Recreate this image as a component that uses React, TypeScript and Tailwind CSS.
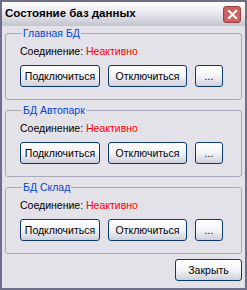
import React from "react";

const font = { fontFamily: '"Liberation Sans", Arial, sans-serif' };

function XpButton({ label, className = "" }: { label: string; className?: string }) {
  return (
    <button
      className={`h-[22px] rounded-[3px] border border-[#0a3a6e] bg-gradient-to-b from-white via-[#f3f3f6] to-[#cfcfdb] text-[10.5px] leading-none text-black ${className}`}
    >
      {label}
    </button>
  );
}

function DbGroup({ title }: { title: string }) {
  return (
    <fieldset className="rounded-[3px] border border-[#a9a9b8] px-[14px] pb-[12px]">
      <legend className="ml-[2px] px-[1px] text-[10.5px] leading-[13px] text-[#0046d5]">{title}</legend>
      <div className="mt-[5px] flex h-[13px] items-center text-[10.5px] leading-[13px]">
        <span className="w-[66px] text-black">Соединение:</span>
        <span className="text-[#ff0000]">Неактивно</span>
      </div>
      <div className="mt-[7px] flex gap-[8px]">
        <XpButton label="Подключиться" className="w-[80px]" />
        <XpButton label="Отключиться" className="w-[79px]" />
        <XpButton label="..." className="w-[28px]" />
      </div>
    </fieldset>
  );
}

export default function App() {
  return (
    <div style={font} className="flex h-[290px] w-[247px] flex-col border-2 border-[#6e6e88] bg-[#e3e2e8]">
      <div className="flex h-[24px] items-center justify-between bg-gradient-to-b from-white via-[#e6e6ec] to-[#c4c4d0] pl-[3px] pr-[4px]">
        <span className="text-[11.5px] font-bold text-black">Состояние баз данных</span>
        <div className="flex h-[17px] w-[18px] items-center justify-center rounded-[3px] border border-[#9a4040] bg-[#d06060]">
          <svg width="11" height="11" viewBox="0 0 11 11">
            <path d="M2 2 L9 9 M9 2 L2 9" stroke="white" strokeWidth="2.2" strokeLinecap="square" />
          </svg>
        </div>
      </div>
      <div className="flex flex-1 flex-col gap-[4px] px-[3px] pt-[1px]">
        <DbGroup title="Главная БД" />
        <DbGroup title="БД Автопарк" />
        <DbGroup title="БД Склад" />
        <div className="mt-[1px] flex justify-end">
          <XpButton label="Закрыть" className="w-[67px]" />
        </div>
      </div>
    </div>
  );
}
